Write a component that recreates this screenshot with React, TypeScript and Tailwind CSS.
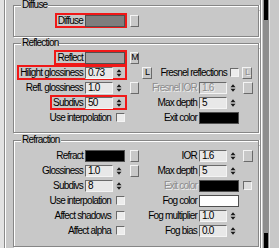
import type { ReactNode } from 'react';

const sunken =
  'border border-t-[#6a6a6a] border-l-[#6a6a6a] border-r-[#f4f4f4] border-b-[#f4f4f4]';
const raised =
  'border border-t-[#f4f4f4] border-l-[#f4f4f4] border-r-[#6a6a6a] border-b-[#6a6a6a]';
const dim = 'text-[#8c8c8c] [text-shadow:1px_1px_0_#f0f0f0]';

function Spinner() {
  return (
    <svg width="6" height="10" viewBox="0 0 6 10" className="ml-[3px] shrink-0">
      <path d="M0.5 4.2L3 1.2L5.5 4.2Z M0.5 5.8L3 8.8L5.5 5.8Z" fill="#1a1a1a" />
    </svg>
  );
}

function Field({ value, disabled }: { value: string; disabled?: boolean }) {
  return (
    <div className="flex items-center">
      <div
        className={`h-[12px] w-[28px] pl-[2px] leading-[10px] ${sunken} ${
          disabled ? `bg-[#d6d6d6] ${dim}` : 'bg-[#e8e8e8] text-black'
        }`}
      >
        {value}
      </div>
      <Spinner />
    </div>
  );
}

function Swatch({ color }: { color: string }) {
  return <div className={`h-[12px] w-[40px] border border-[#505050] ${color}`} />;
}

function Btn({ label, disabled, className = '' }: { label?: string; disabled?: boolean; className?: string }) {
  return (
    <div
      className={`flex h-[12px] w-[9px] items-center justify-center bg-[#c8c8c8] text-[9px] leading-none ${raised} ${
        disabled ? dim : 'text-black'
      } ${className}`}
    >
      {label}
    </div>
  );
}

function Check({ className = '', disabled }: { className?: string; disabled?: boolean }) {
  return (
    <div
      className={`h-[9px] w-[9px] shrink-0 ${sunken} ${disabled ? 'bg-[#dcdcdc]' : 'bg-[#ececec]'} ${className}`}
    />
  );
}

// label + control, optionally inside the red marker box
function Left({ label, red, children }: { label: string; red?: boolean; children: ReactNode }) {
  return (
    <div
      className={`flex h-[15px] items-center gap-[2px] border-2 pl-[1px] ${
        red ? 'border-[#f01818]' : 'border-transparent'
      }`}
    >
      <span className="whitespace-nowrap">{label}</span>
      <div className="flex w-[40px] items-center">{children}</div>
    </div>
  );
}

function CheckLeft({ label }: { label: string }) {
  return (
    <div className="flex h-[15px] items-center border-2 border-transparent">
      <span className="whitespace-nowrap">{label}</span>
      <Check className="ml-[5px]" />
    </div>
  );
}

function Right({ label, disabled, children }: { label: string; disabled?: boolean; children: ReactNode }) {
  return (
    <div className="flex items-center">
      <div className="flex w-[45px] justify-end">
        <span className={`shrink-0 whitespace-nowrap ${disabled ? dim : ''}`}>{label}</span>
      </div>
      <div className="ml-[2px] flex items-center">{children}</div>
    </div>
  );
}

function Row({
  left,
  leftBtn,
  lBtn,
  right,
}: {
  left?: ReactNode;
  leftBtn?: ReactNode;
  lBtn?: ReactNode;
  right?: ReactNode;
}) {
  return (
    <div className="flex h-[15px] items-center">
      <div className="flex w-[113px] justify-end">{left}</div>
      <div className="ml-[3px] w-[9px]">{leftBtn}</div>
      <div className="ml-[3px] w-[10px]">{lBtn}</div>
      <div className="flex w-[105px] items-center">{right}</div>
    </div>
  );
}

// etched group box: title row carries the top line, body carries the sides
function Group({ title, className = '', children }: { title: string; className?: string; children: ReactNode }) {
  return (
    <div className={`flex w-[246px] flex-col ${className}`}>
      <div className="flex h-[10px] items-end">
        <div className="h-[5px] w-[8px] border-t border-l border-[#868686] shadow-[inset_1px_1px_0_#fff]" />
        <div className="self-start px-[1px] leading-[10px]">{title}</div>
        <div className="h-[5px] flex-1 border-t border-r border-[#868686] shadow-[inset_0_1px_0_#fff,1px_0_0_#fff]" />
      </div>
      <div className="border-x border-b border-[#868686] shadow-[inset_1px_0_0_#fff,1px_1px_0_#fff]">
        {children}
      </div>
    </div>
  );
}

export default function App() {
  return (
    <div className="flex h-[248px] w-[279px] overflow-hidden bg-[#c8c8c8] [font-family:Liberation_Sans,Arial,sans-serif] text-[10px] leading-[10px] [letter-spacing:-0.8px] text-black">
      <div className="w-[4px] shrink-0 bg-[#e2e2e2]" />
      <div className="w-[1px] shrink-0 bg-[#8a8a8a]" />
      <div className="w-[1px] shrink-0 bg-white" />

      <div className="flex w-[253px] shrink-0 flex-col pl-[7px]">
        <Group title="Diffuse">
          <div className="pt-[3px] pb-[8px]">
            <Row left={<Left label="Diffuse" red><Swatch color="bg-[#7e7e7e]" /></Left>} leftBtn={<Btn />} />
          </div>
        </Group>

        <Group title="Reflection" className="mt-[1px]">
          <div className="pt-[2px] pb-[7px]">
            <Row left={<Left label="Reflect" red><Swatch color="bg-[#a2a2a2]" /></Left>} leftBtn={<Btn label="M" />} />
            <Row
              left={<Left label="Hilight glossiness" red><Field value="0.73" /></Left>}
              lBtn={<Btn label="L" className="w-[10px]" />}
              right={
                <div className="flex items-center">
                  <div className="flex w-[75px] justify-end">
                    <span className="whitespace-nowrap">Fresnel reflections</span>
                  </div>
                  <Check className="ml-[3px]" />
                  <Btn label="L" disabled className="ml-[3px] w-[10px]" />
                </div>
              }
            />
            <Row
              left={<Left label="Refl. glossiness"><Field value="1.0" /></Left>}
              leftBtn={<Btn />}
              right={
                <Right label="Fresnel IOR" disabled>
                  <Field value="1.6" disabled />
                  <Btn className="ml-[7px] w-[10px]" />
                </Right>
              }
            />
            <Row
              left={<Left label="Subdivs" red><Field value="50" /></Left>}
              right={
                <Right label="Max depth">
                  <Field value="5" />
                </Right>
              }
            />
            <Row
              left={<CheckLeft label="Use interpolation" />}
              right={
                <Right label="Exit color">
                  <Swatch color="bg-black" />
                </Right>
              }
            />
          </div>
        </Group>

        <Group title="Refraction" className="mt-[2px]">
          <div className="pt-[3px] pb-[8px]">
            <Row
              left={<Left label="Refract"><Swatch color="bg-black" /></Left>}
              leftBtn={<Btn />}
              right={
                <Right label="IOR">
                  <Field value="1.6" />
                  <Btn className="ml-[7px] w-[10px]" />
                </Right>
              }
            />
            <Row
              left={<Left label="Glossiness"><Field value="1.0" /></Left>}
              leftBtn={<Btn />}
              right={
                <Right label="Max depth">
                  <Field value="5" />
                </Right>
              }
            />
            <Row
              left={<Left label="Subdivs"><Field value="8" /></Left>}
              right={
                <Right label="Exit color" disabled>
                  <Swatch color="bg-black" />
                  <Check disabled className="ml-[4px]" />
                </Right>
              }
            />
            <Row
              left={<CheckLeft label="Use interpolation" />}
              right={
                <Right label="Fog color">
                  <Swatch color="bg-white" />
                </Right>
              }
            />
            <Row
              left={<CheckLeft label="Affect shadows" />}
              right={
                <Right label="Fog multiplier">
                  <Field value="1.0" />
                </Right>
              }
            />
            <Row
              left={<CheckLeft label="Affect alpha" />}
              right={
                <Right label="Fog bias">
                  <Field value="0.0" />
                </Right>
              }
            />
          </div>
        </Group>
      </div>

      {/* scrollbar strip */}
      <div className="ml-[1px] w-[1px] shrink-0 bg-[#8a8a8a]" />
      <div className="w-[1px] shrink-0 bg-white" />
      <div className="ml-[1px] flex w-[6px] shrink-0 flex-col justify-between bg-[#8e8e8e] px-[1px]">
        <div className="h-[20px] bg-black" />
        <div className="h-[15px] bg-black" />
      </div>
      <div className="flex-1 border-l border-[#e6e6e6] bg-[#c8c8c8]" />
    </div>
  );
}
